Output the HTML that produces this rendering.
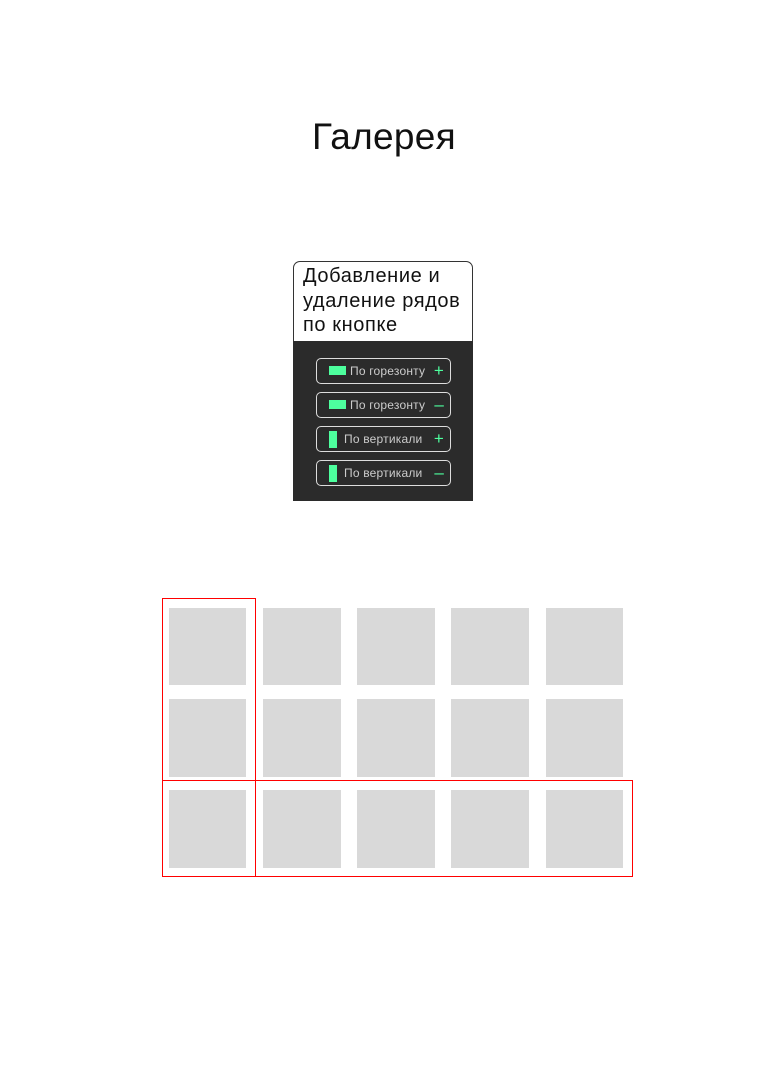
<!DOCTYPE html>
<html><head><meta charset="utf-8"><style>
body{margin:0;width:768px;height:1080px;background:#fff;position:relative;font-family:"Liberation Sans",sans-serif;overflow:hidden}
.a{position:absolute}
.sq{position:absolute;width:77px;height:77px;background:#d9d9d9}
.btn{position:absolute;left:316px;width:133px;height:24px;border:1px solid #ddd;border-radius:5px;color:#ccc;font-size:12px;letter-spacing:0.2px;box-sizing:content-box}
.btn span{position:absolute;top:5px}
.btn b{position:absolute;right:6px;top:2px;color:#4dff9e;font-weight:normal;font-size:17px}
.ic{position:absolute;background:#4dff9e}
</style></head><body>
<div class="a" style="left:0;width:768px;top:116px;text-align:center;font-size:37px;letter-spacing:0.3px;color:#111">Галерея</div>
<div class="a" style="left:293px;top:261px;width:180px;height:80px;border:1px solid #333;border-bottom:none;border-radius:7px 7px 0 0;background:#fff;box-sizing:border-box"></div>
<div class="a" style="left:303px;top:264px;font-size:20px;letter-spacing:0.6px;line-height:24.5px;color:#111">Добавление и<br>удаление рядов<br>по кнопке</div>
<div class="a" style="left:293px;top:341px;width:180px;height:160px;background:#2b2b2b"></div>
<div class="btn" style="top:358px"><div class="ic" style="left:12px;top:7px;width:17px;height:9px"></div><span style="left:33px">По горезонту</span><b>+</b></div>
<div class="btn" style="top:392px"><div class="ic" style="left:12px;top:7px;width:17px;height:9px"></div><span style="left:33px">По горезонту</span><b>–</b></div>
<div class="btn" style="top:426px"><div class="ic" style="left:12px;top:4px;width:8px;height:17px"></div><span style="left:27px">По вертикали</span><b>+</b></div>
<div class="btn" style="top:460px"><div class="ic" style="left:12px;top:4px;width:8px;height:17px"></div><span style="left:27px">По вертикали</span><b>–</b></div>

<div class="sq" style="left:169px;top:608px"></div><div class="sq" style="left:263px;top:608px;width:78px"></div><div class="sq" style="left:357px;top:608px;width:78px"></div><div class="sq" style="left:451px;top:608px;width:78px"></div><div class="sq" style="left:546px;top:608px"></div>
<div class="sq" style="left:169px;top:699px;height:78px"></div><div class="sq" style="left:263px;top:699px;width:78px;height:78px"></div><div class="sq" style="left:357px;top:699px;width:78px;height:78px"></div><div class="sq" style="left:451px;top:699px;width:78px;height:78px"></div><div class="sq" style="left:546px;top:699px;height:78px"></div>
<div class="sq" style="left:169px;top:790px;height:78px"></div><div class="sq" style="left:263px;top:790px;width:78px;height:78px"></div><div class="sq" style="left:357px;top:790px;width:78px;height:78px"></div><div class="sq" style="left:451px;top:790px;width:78px;height:78px"></div><div class="sq" style="left:546px;top:790px;height:78px"></div>

<div class="a" style="left:162px;top:598px;width:94px;height:279px;border:1px solid red;box-sizing:border-box"></div>
<div class="a" style="left:162px;top:780px;width:471px;height:97px;border:1px solid red;box-sizing:border-box"></div>
</body></html>
